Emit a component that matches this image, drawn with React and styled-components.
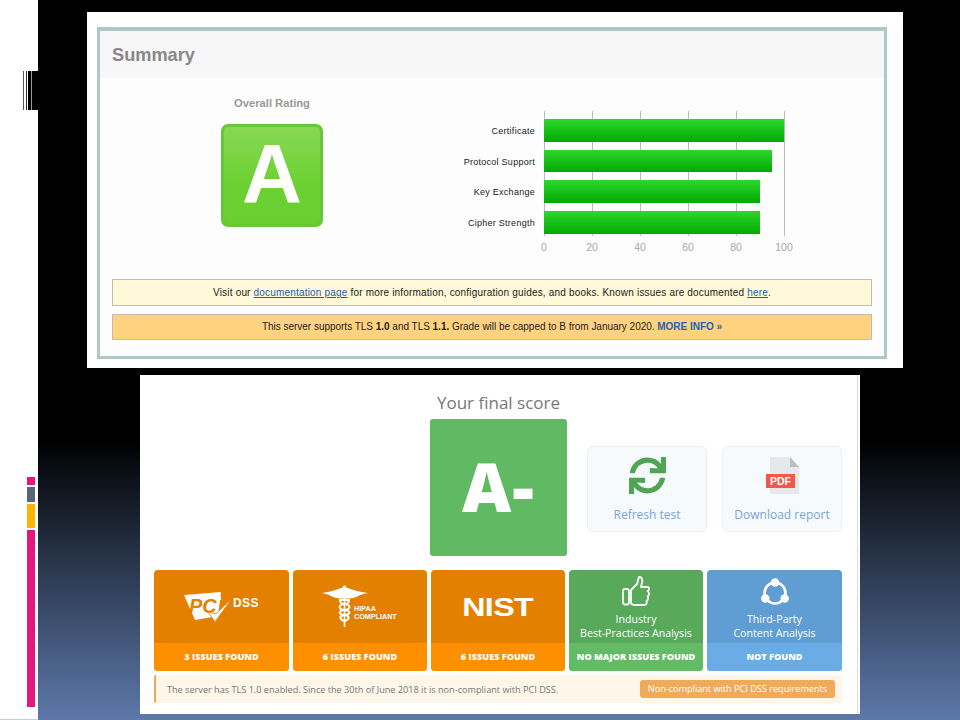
import React from "react";
import styled, { createGlobalStyle } from "styled-components";
import { FaSync } from "react-icons/fa";

const GlobalStyle = createGlobalStyle`
  html, body {
    margin: 0;
    padding: 0;
    width: 960px;
    height: 720px;
    overflow: hidden;
    background: #fff;
  }
`;

const Slide = styled.div`
  display: flex;
  width: 960px;
  height: 720px;
`;

const Rail = styled.aside`
  width: 38px;
  height: 720px;
  background: #fff;
  border-bottom: 1px solid #ccc;
  display: flex;
  flex-direction: column;
  align-items: flex-end;
  padding-top: 71px;
  box-sizing: border-box;
`;

const Barcode = styled.div`
  width: 15px;
  height: 39px;
  background: linear-gradient(
    90deg,
    #555 0 1px, #fff 1px 3px,
    #333 3px 4px, #fff 4px 5px,
    #000 5px 8px, #999 8px 9px,
    #000 9px 15px
  );
`;

const RailBars = styled.div`
  display: flex;
  flex-direction: column;
  gap: 2px;
  width: 8px;
  margin: 367px 3px 0 0;
`;

const RailBar = styled.div`
  height: ${p => p.$h}px;
  background: ${p => p.$color};
`;

const Stage = styled.main`
  flex: 1;
  height: 720px;
  display: flex;
  flex-direction: column;
  background: linear-gradient(180deg, #000 0, #000 61%, #5d79aa 100%);
  padding-top: 12px;
  box-sizing: border-box;
`;

/* top screenshot */
const SummaryShot = styled.section`
  width: 816px;
  height: 356px;
  margin-left: 49px;
  background: #fff;
  padding: 15px 16px 9px 10px;
  box-sizing: border-box;
  font-family: "Liberation Sans", Arial, sans-serif;
`;

const SummaryFrame = styled.div`
  height: 100%;
  border: solid #afc7c7;
  border-width: 4px 3px 3px 3px;
  box-sizing: border-box;
  background: #fdfdfd;
`;

const SummaryHead = styled.h2`
  margin: 0;
  height: 47px;
  padding-left: 12px;
  background: #f7f7f7;
  color: #888;
  font-size: 18.2px;
  line-height: 49px;
  font-weight: bold;
`;

const SummaryBody = styled.div`
  display: flex;
  height: 201px;
`;

const RatingCol = styled.div`
  width: 344px;
  display: flex;
  flex-direction: column;
  align-items: center;
  padding-top: 18px;
  box-sizing: border-box;
`;

const RatingLabel = styled.div`
  font-size: 11.2px;
  font-weight: bold;
  color: #999;
  line-height: 14px;
  margin-bottom: 14px;
`;

const GradeBox = styled.div`
  width: 102px;
  height: 103px;
  box-sizing: border-box;
  border: 3px solid #68c63a;
  border-radius: 7px;
  background: linear-gradient(180deg, #88d854 0, #6bd132 60%, #69cf30 100%);
  color: #fff;
  font-size: 83px;
  font-weight: bold;
  line-height: 95px;
  text-align: center;
`;

const Chart = styled.div`
  display: grid;
  grid-template-columns: 91px 241px;
  column-gap: 9px;
  margin-top: 33px;
  align-self: flex-start;
`;

const Labels = styled.div`
  display: flex;
  flex-direction: column;
  padding-top: 8px;
  gap: 8px;
`;

const BarLabel = styled.div`
  height: 22.67px;
  line-height: 24px;
  font-size: 9px;
  color: #222;
  text-align: right;
  white-space: nowrap;
  letter-spacing: 0.27px;
`;

const Plot = styled.div`
  display: flex;
  flex-direction: column;
  gap: 8px;
  height: 125px;
  padding-top: 8px;
  box-sizing: border-box;
  background: repeating-linear-gradient(90deg, #bbb 0 1px, transparent 1px 48px);
`;

const Bar = styled.div`
  height: 22.67px;
  background: linear-gradient(180deg, #2ed52e 0, #14bf14 55%, #04a904 100%);
`;

const Ticks = styled.div`
  grid-column: 2;
  display: flex;
  justify-content: space-between;
  width: 240px;
  margin-top: 5px;
`;

const Tick = styled.span`
  width: 0;
  display: flex;
  justify-content: center;
  font-size: 10.5px;
  line-height: 12px;
  color: #a6a6a6;
`;

const Notice = styled.div`
  margin: 0 12px 8px 12px;
  height: ${p => p.$h}px;
  line-height: ${p => p.$h - 2}px;
  border: 1px solid #bdbdb0;
  box-sizing: border-box;
  background: ${p => p.$bg};
  font-size: 10px;
  letter-spacing: ${p => p.$ls}px;
  color: #222;
  text-align: center;
`;

const DocLink = styled.a`
  color: #1a5fa8;
  text-decoration: underline;
`;

const MoreLink = styled.span`
  color: #2460b8;
  font-weight: bold;
`;

/* bottom screenshot */
const ScoreShot = styled.section`
  width: 720px;
  height: 339px;
  margin: 7px 0 0 102px;
  background: linear-gradient(90deg, #fff 0 717px, #dcdcdc 717px 718.5px, #fff 718.5px);
  box-sizing: border-box;
  padding: 0 18px 0 14px;
  font-family: "Open Sans", "Noto Sans", sans-serif;
`;

const ScoreTitle = styled.h2`
  margin: 0;
  padding-top: 15px;
  height: 44px;
  box-sizing: border-box;
  text-align: center;
  font-size: 17px;
  font-weight: normal;
  line-height: 26px;
  color: #777;
  padding-left: 1px;
`;

const ScoreRow = styled.div`
  display: flex;
  align-items: center;
  height: 137px;
  padding-left: 276px;
  margin-bottom: 14px;
`;

const ScoreBox = styled.div`
  width: 137px;
  height: 137px;
  border-radius: 3px;
  background: #5fba63;
  color: #fff;
  font-size: 68px;
  font-weight: 800;
  letter-spacing: 1px;
  line-height: 133px;
  text-align: center;
  margin-right: 20px;
`;

const ActionCard = styled.div`
  width: 120px;
  height: 86px;
  box-sizing: border-box;
  margin-right: 15px;
  margin-top: 3px;
  border: 1px solid #e9eff4;
  border-radius: 6px;
  background: #f7fafd;
  display: flex;
  flex-direction: column;
  align-items: center;
  padding-top: 8px;
  &:last-child { margin-right: 0; }
`;

const ActionIcon = styled.div`
  height: 40px;
  display: flex;
  align-items: center;
  justify-content: center;
  color: #4fa553;
`;

const ActionLabel = styled.div`
  margin-top: 12px;
  font-size: 12px;
  line-height: 16px;
  color: #7aa5d5;
  white-space: nowrap;
`;

const Cards = styled.div`
  display: grid;
  grid-template-columns: 135px 134px 134px 134px 135px;
  gap: 4px;
`;

const Card = styled.div`
  height: 101px;
  border-radius: 4px;
  overflow: hidden;
  display: flex;
  flex-direction: column;
  background: ${p => p.$bg};
  color: #fff;
`;

const CardTop = styled.div`
  height: 73px;
  display: flex;
  flex-direction: column;
  align-items: center;
  justify-content: center;
  text-align: center;
`;

const AnalysisTop = styled(CardTop)`
  justify-content: flex-start;
  padding-top: 6px;
  box-sizing: border-box;
`;

const AnalysisIcon = styled.div`
  height: 30px;
  display: flex;
  align-items: center;
  justify-content: center;
`;

const CardLabel = styled.div`
  font-size: 10.6px;
  line-height: 14.4px;
  margin-top: 6px;
  white-space: nowrap;
`;

const CardFoot = styled.div`
  height: 28px;
  line-height: 28px;
  background: ${p => p.$bg};
  font-size: 9.15px;
  font-weight: 800;
  text-align: center;
  white-space: nowrap;
`;

const NistMark = styled.div`
  font-family: "Liberation Sans", Arial, sans-serif;
  font-size: 26px;
  font-weight: bold;
  letter-spacing: -0.5px;
  transform: scaleX(1.24);
  line-height: 30px;
`;

const Compliance = styled.div`
  margin-top: 4px;
  height: 28px;
  display: flex;
  align-items: center;
  justify-content: space-between;
  border-left: 2px solid #eda75c;
  border-radius: 2px;
  background: #fdf6e9;
  padding: 0 7px 0 11px;
  font-size: 9.15px;
  color: #777;
`;

const ComplianceBadge = styled.span`
  width: 195px;
  height: 18px;
  line-height: 18px;
  border-radius: 3px;
  background: #f0aa5c;
  color: #fff;
  text-align: center;
  font-size: 9.15px;
  white-space: nowrap;
`;

const barRows = [
  { label: "Certificate", value: 100 },
  { label: "Protocol Support", value: 95 },
  { label: "Key Exchange", value: 90 },
  { label: "Cipher Strength", value: 90 },
];

const railBars = [
  { h: 8, color: "#e5177f" },
  { h: 15, color: "#56677c" },
  { h: 24, color: "#ffb400" },
  { h: 177, color: "#e5177f" },
];

function PdfIcon() {
  return (
    <svg width="33" height="37" viewBox="0 0 33 37">
      <path d="M4 0H24L33 10V37H4Z" fill="#e6e8ec" />
      <path d="M24 0L33 10H24Z" fill="#b9bdc4" />
      <rect x="0" y="17" width="29" height="14" fill="#f0594a" />
      <text x="14.5" y="28" textAnchor="middle" fontSize="10.5" fontWeight="bold" fill="#fff" fontFamily="Liberation Sans">PDF</text>
    </svg>
  );
}

function PciLogo() {
  return (
    <svg width="76" height="32" viewBox="0 0 76 32">
      <path d="M0 4L37 1L34 25L11 29Z" fill="#fff" />
      <text x="5" y="22" fontSize="20" fontWeight="bold" fontStyle="italic" fill="#e38000" fontFamily="Liberation Sans">PC</text>
      <rect x="33" y="5" width="4" height="4" fill="#fff" />
      <path d="M24 21L31 31L48 7L32 23Z" fill="#fff" stroke="#e38000" strokeWidth="0.8" />
      <text x="49" y="16" fontSize="12" fontWeight="bold" letterSpacing="0.4" fill="#fff" fontFamily="Liberation Sans">DSS</text>
    </svg>
  );
}

function HipaaLogo() {
  return (
    <svg width="76" height="43" viewBox="0 0 76 43">
      <path d="M22 2C16 4 8 7 0 8C5 9 7 10 9 11C12 13 18 14 22 13Z" fill="#fff" />
      <path d="M23 2C29 4 37 7 46 8C41 9 38 10 36 11C33 13 27 14 23 13Z" fill="#fff" />
      <circle cx="22.5" cy="2" r="1.6" fill="#fff" />
      <path d="M22.5 2V42" stroke="#fff" strokeWidth="1.6" />
      <path d="M17 15C29 13 29 18 22.5 19C16 20 16 24 22.5 25C29 26 29 29 22.5 30C17 31 17 34 22.5 36" fill="none" stroke="#fff" strokeWidth="2" />
      <path d="M28 15C16 13 16 18 22.5 19C29 20 29 24 22.5 25C16 26 16 29 22.5 30C28 31 28 34 22.5 36" fill="none" stroke="#fff" strokeWidth="2" />
      <text x="32" y="25.5" fontSize="7.2" fontWeight="bold" fill="#fff" fontFamily="Liberation Sans">HIPAA</text>
      <text x="32" y="34" fontSize="7.2" fontWeight="bold" fill="#fff" fontFamily="Liberation Sans">COMPLIANT</text>
    </svg>
  );
}

function ThumbIcon() {
  return (
    <svg width="28" height="30" viewBox="0 0 28 30" fill="none" stroke="#fff" strokeWidth="1.8" strokeLinejoin="round">
      <rect x="1" y="13" width="6" height="15.5" rx="2" />
      <path d="M9 14L15 8C16 6 16 3 17 1C20 1 21 4 20 7L19 11H25.5C27.5 11 27.5 14.5 25.5 15C27.5 16 27.5 19.5 25.5 20C26.5 21 26.5 24 24.5 25C25.5 27 24 29 22 29H13C11 29 9 28 9 27Z" />
    </svg>
  );
}

function ThirdPartyIcon() {
  return (
    <svg width="28" height="27" viewBox="0 0 28 27">
      <circle cx="14" cy="15" r="10.5" fill="none" stroke="#fff" strokeWidth="2.6" />
      <circle cx="14" cy="4.5" r="4.2" fill="#fff" />
      <circle cx="4.3" cy="20.5" r="4.2" fill="#fff" />
      <circle cx="23.7" cy="20.5" r="4.2" fill="#fff" />
    </svg>
  );
}

export default function App() {
  return (
    <Slide>
      <GlobalStyle />
      <Rail>
        <Barcode />
        <RailBars>
          {railBars.map((b, i) => <RailBar key={i} $h={b.h} $color={b.color} />)}
        </RailBars>
      </Rail>
      <Stage>
        <SummaryShot>
          <SummaryFrame>
            <SummaryHead>Summary</SummaryHead>
            <SummaryBody>
              <RatingCol>
                <RatingLabel>Overall Rating</RatingLabel>
                <GradeBox>A</GradeBox>
              </RatingCol>
              <Chart>
                <Labels>
                  {barRows.map(r => <BarLabel key={r.label}>{r.label}</BarLabel>)}
                </Labels>
                <Plot>
                  {barRows.map(r => <Bar key={r.label} style={{ width: `${r.value * 2.4}px` }} />)}
                </Plot>
                <Ticks>
                  {[0, 20, 40, 60, 80, 100].map(t => <Tick key={t}>{t}</Tick>)}
                </Ticks>
              </Chart>
            </SummaryBody>
            <Notice $h={27} $bg="#fff9d9" $ls={0.185}>
              Visit our <DocLink>documentation page</DocLink> for more information, configuration guides, and books. Known issues are documented <DocLink>here</DocLink>.
            </Notice>
            <Notice $h={26} $bg="#ffd27f" $ls={-0.02}>
              This server supports TLS <b>1.0</b> and TLS <b>1.1.</b> Grade will be capped to B from January 2020. <MoreLink>MORE INFO »</MoreLink>
            </Notice>
          </SummaryFrame>
        </SummaryShot>
        <ScoreShot>
          <ScoreTitle>Your final score</ScoreTitle>
          <ScoreRow>
            <ScoreBox>A-</ScoreBox>
            <ActionCard>
              <ActionIcon><FaSync size={37} /></ActionIcon>
              <ActionLabel>Refresh test</ActionLabel>
            </ActionCard>
            <ActionCard>
              <ActionIcon><PdfIcon /></ActionIcon>
              <ActionLabel>Download report</ActionLabel>
            </ActionCard>
          </ScoreRow>
          <Cards>
            <Card $bg="#e38000">
              <CardTop><PciLogo /></CardTop>
              <CardFoot $bg="#fe8f01">3 ISSUES FOUND</CardFoot>
            </Card>
            <Card $bg="#e38000">
              <CardTop><HipaaLogo /></CardTop>
              <CardFoot $bg="#fe8f01">6 ISSUES FOUND</CardFoot>
            </Card>
            <Card $bg="#e38000">
              <CardTop><NistMark>NIST</NistMark></CardTop>
              <CardFoot $bg="#fe8f01">6 ISSUES FOUND</CardFoot>
            </Card>
            <Card $bg="#59a95b">
              <AnalysisTop>
                <AnalysisIcon><ThumbIcon /></AnalysisIcon>
                <CardLabel>Industry<br />Best-Practices Analysis</CardLabel>
              </AnalysisTop>
              <CardFoot $bg="#63bb66">NO MAJOR ISSUES FOUND</CardFoot>
            </Card>
            <Card $bg="#609dd2">
              <AnalysisTop>
                <AnalysisIcon><ThirdPartyIcon /></AnalysisIcon>
                <CardLabel>Third-Party<br />Content Analysis</CardLabel>
              </AnalysisTop>
              <CardFoot $bg="#69ace6">NOT FOUND</CardFoot>
            </Card>
          </Cards>
          <Compliance>
            <span>The server has TLS 1.0 enabled. Since the 30th of June 2018 it is non-compliant with PCI DSS.</span>
            <ComplianceBadge>Non-compliant with PCI DSS requirements</ComplianceBadge>
          </Compliance>
        </ScoreShot>
      </Stage>
    </Slide>
  );
}
